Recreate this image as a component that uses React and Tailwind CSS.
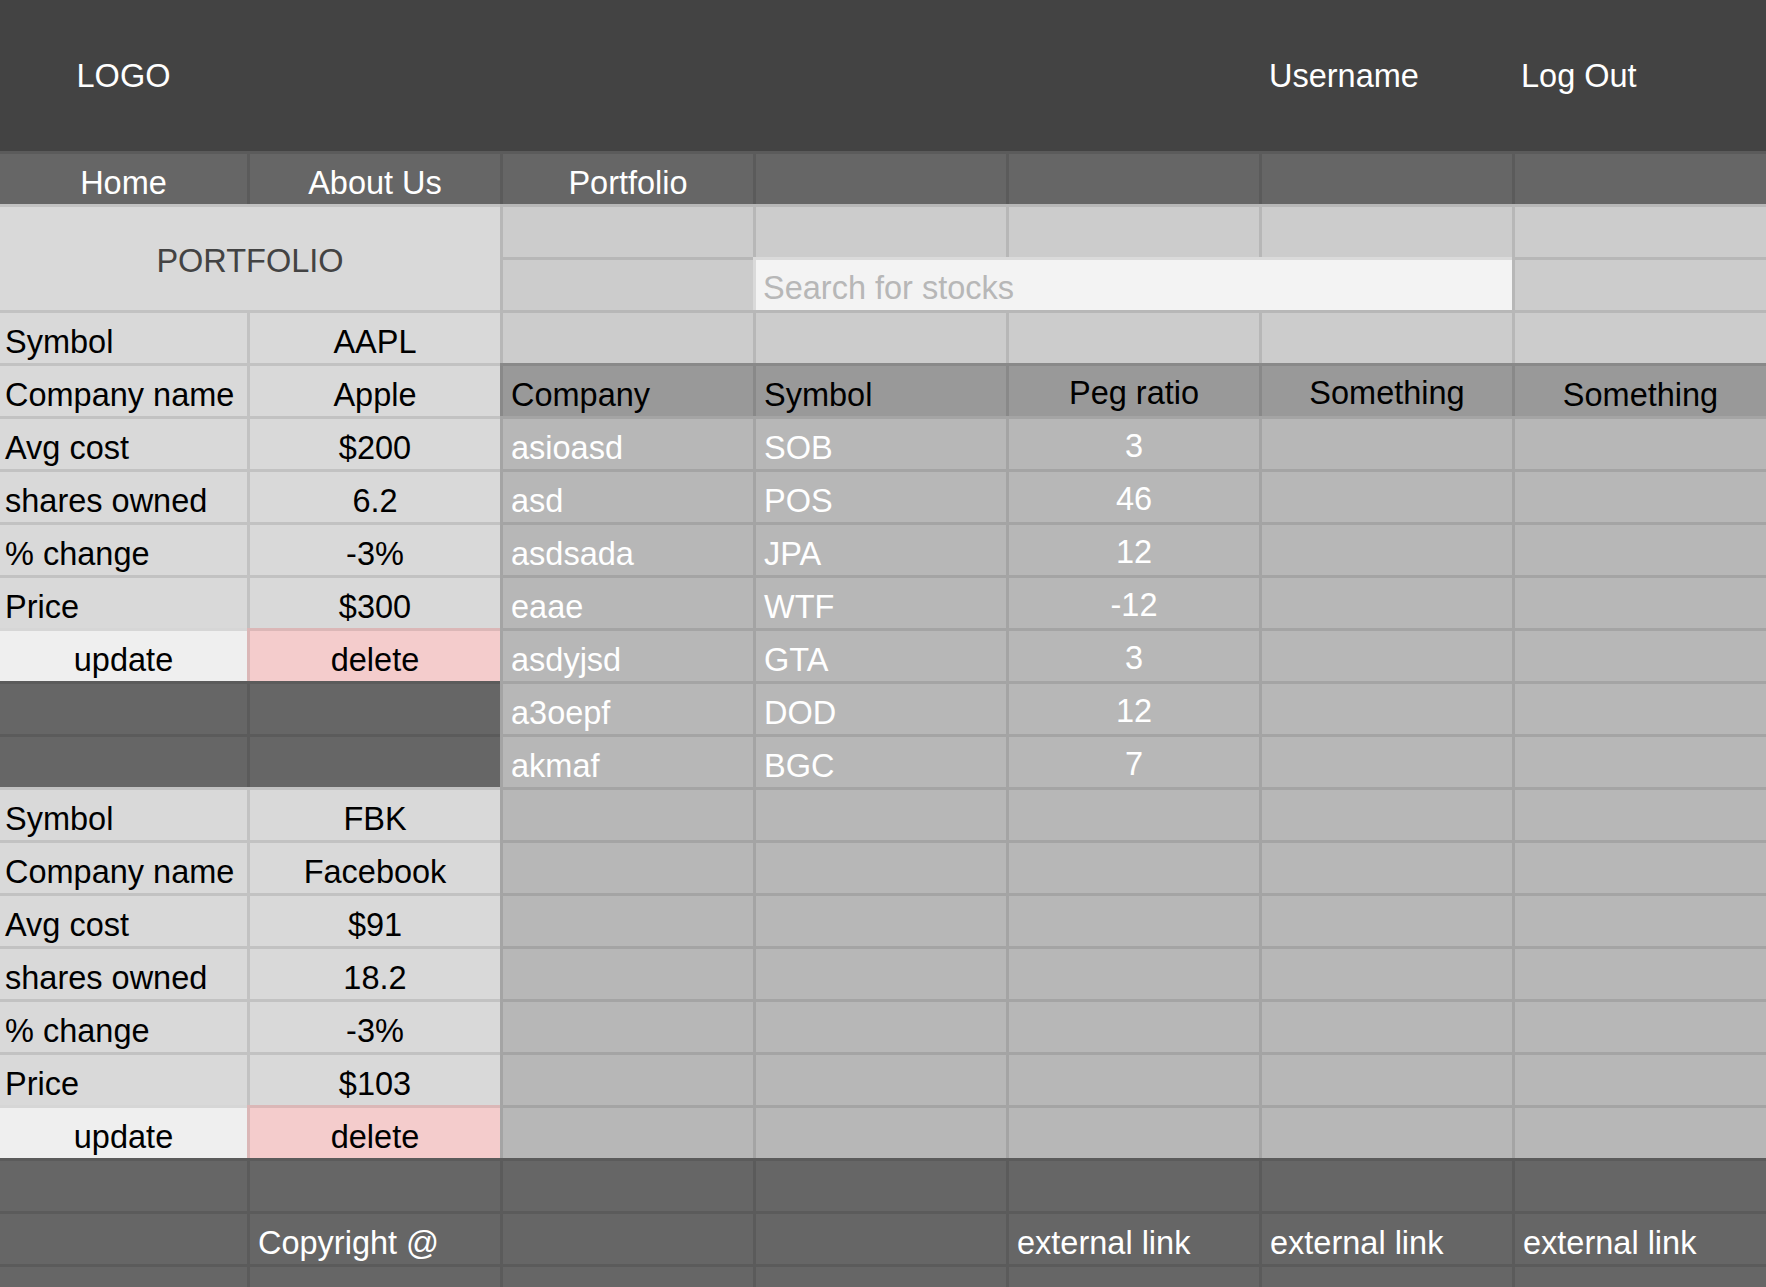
import clsx from 'clsx';

const portfolios = [
  {
    rows: [
      ['Symbol', 'AAPL'],
      ['Company name', 'Apple'],
      ['Avg cost', '$200'],
      ['shares owned', '6.2'],
      ['% change', '-3%'],
      ['Price', '$300'],
    ],
  },
  {
    rows: [
      ['Symbol', 'FBK'],
      ['Company name', 'Facebook'],
      ['Avg cost', '$91'],
      ['shares owned', '18.2'],
      ['% change', '-3%'],
      ['Price', '$103'],
    ],
  },
];

const stocks = [
  ['asioasd', 'SOB', '3'],
  ['asd', 'POS', '46'],
  ['asdsada', 'JPA', '12'],
  ['eaae', 'WTF', '-12'],
  ['asdyjsd', 'GTA', '3'],
  ['a3oepf', 'DOD', '12'],
  ['akmaf', 'BGC', '7'],
];

// one spreadsheet-like cell: line on top and left, text sits near the bottom
const Cell = ({ first, bg, center, raised, className, children }) => (
  <div
    className={clsx(
      'flex items-end border-t-[3px] border-black/10 whitespace-nowrap',
      !first && 'border-l-[3px]',
      center ? 'justify-center' : first ? 'pl-[5px]' : 'pl-[8px]',
      raised ? 'pb-[7px]' : 'pb-[5px]',
      bg,
      className
    )}
  >
    {children}
  </div>
);

const Blank = ({ bg, first }) => <Cell bg={bg} first={first} />;

const App = () => {
  const left1 = portfolios[0].rows;
  const left2 = portfolios[1].rows;

  return (
    <div
      className="h-[1287px] w-[1766px] overflow-hidden bg-[#666666] text-[32.5px] leading-none"
      style={{ fontFamily: '"Liberation Sans", Arial, sans-serif' }}
    >
      {/* Header */}
      <div className="grid h-[151px] grid-cols-[247px_repeat(5,253px)_1fr] items-center bg-[#434343] pt-[2px] text-white">
        <div className="flex justify-center">LOGO</div>
        <div className="col-start-6 pl-[10px]">Username</div>
        <div className="pl-[9px]">Log Out</div>
      </div>

      <div className="grid grid-cols-[247px_repeat(5,253px)_1fr] auto-rows-[53px]">
        {/* Nav */}
        <Cell first center bg="bg-[#666666]" className="text-white">Home</Cell>
        <Cell center bg="bg-[#666666]" className="text-white">About Us</Cell>
        <Cell center bg="bg-[#666666]" className="text-white">Portfolio</Cell>
        <Blank bg="bg-[#666666]" />
        <Blank bg="bg-[#666666]" />
        <Blank bg="bg-[#666666]" />
        <Blank bg="bg-[#666666]" />

        {/* Portfolio title + search */}
        <div className="col-span-2 row-span-2 flex items-center justify-center border-t-[3px] border-black/10 bg-[#d9d9d9] pt-[5px] text-[#434343]">
          PORTFOLIO
        </div>
        <Blank bg="bg-[#cccccc]" />
        <Blank bg="bg-[#cccccc]" />
        <Blank bg="bg-[#cccccc]" />
        <Blank bg="bg-[#cccccc]" />
        <Blank bg="bg-[#cccccc]" />

        <Blank bg="bg-[#cccccc]" />
        <div className="col-span-3 border-t-[3px] border-l-[3px] border-black/10 bg-[#f3f3f3]">
          <input
            type="text"
            placeholder="Search for stocks"
            className="box-border h-full w-full bg-transparent pl-[7px] pt-[7px] text-[32.5px] text-black outline-none placeholder:text-[#b7b7b7]"
          />
        </div>
        <Blank bg="bg-[#cccccc]" />

        {/* Symbol row */}
        <Cell first bg="bg-[#d9d9d9]">{left1[0][0]}</Cell>
        <Cell center bg="bg-[#d9d9d9]">{left1[0][1]}</Cell>
        <Blank bg="bg-[#cccccc]" />
        <Blank bg="bg-[#cccccc]" />
        <Blank bg="bg-[#cccccc]" />
        <Blank bg="bg-[#cccccc]" />
        <Blank bg="bg-[#cccccc]" />

        {/* Company row + table header */}
        <Cell first bg="bg-[#d9d9d9]">{left1[1][0]}</Cell>
        <Cell center bg="bg-[#d9d9d9]">{left1[1][1]}</Cell>
        <Cell bg="bg-[#999999]">Company</Cell>
        <Cell bg="bg-[#999999]">Symbol</Cell>
        <Cell center raised bg="bg-[#999999]">Peg ratio</Cell>
        <Cell center raised bg="bg-[#999999]">Something</Cell>
        <Cell center bg="bg-[#999999]">Something</Cell>

        {stocks.map((s, i) => {
          let left;
          if (i < 4) {
            const [label, value] = left1[i + 2];
            left = (
              <>
                <Cell first bg="bg-[#d9d9d9]">{label}</Cell>
                <Cell center bg="bg-[#d9d9d9]">{value}</Cell>
              </>
            );
          } else if (i === 4) {
            left = (
              <>
                <Cell first center bg="bg-[#efefef]">update</Cell>
                <Cell center bg="bg-[#f4cccc]">delete</Cell>
              </>
            );
          } else {
            left = (
              <>
                <Blank first bg="bg-[#666666]" />
                <Blank bg="bg-[#666666]" />
              </>
            );
          }
          return (
            <div key={s[0]} className="contents">
              {left}
              <Cell bg="bg-[#b7b7b7]" className="text-white">{s[0]}</Cell>
              <Cell bg="bg-[#b7b7b7]" className="text-white">{s[1]}</Cell>
              <Cell center raised bg="bg-[#b7b7b7]" className="text-white">{s[2]}</Cell>
              <Blank bg="bg-[#b7b7b7]" />
              <Blank bg="bg-[#b7b7b7]" />
            </div>
          );
        })}

        {/* Second portfolio */}
        {left2.map(([label, value]) => (
          <div key={label} className="contents">
            <Cell first bg="bg-[#d9d9d9]">{label}</Cell>
            <Cell center bg="bg-[#d9d9d9]">{value}</Cell>
            <Blank bg="bg-[#b7b7b7]" />
            <Blank bg="bg-[#b7b7b7]" />
            <Blank bg="bg-[#b7b7b7]" />
            <Blank bg="bg-[#b7b7b7]" />
            <Blank bg="bg-[#b7b7b7]" />
          </div>
        ))}
        <Cell first center bg="bg-[#efefef]">update</Cell>
        <Cell center bg="bg-[#f4cccc]">delete</Cell>
        <Blank bg="bg-[#b7b7b7]" />
        <Blank bg="bg-[#b7b7b7]" />
        <Blank bg="bg-[#b7b7b7]" />
        <Blank bg="bg-[#b7b7b7]" />
        <Blank bg="bg-[#b7b7b7]" />

        {/* Footer */}
        <Blank first bg="bg-[#666666]" />
        <Blank bg="bg-[#666666]" />
        <Blank bg="bg-[#666666]" />
        <Blank bg="bg-[#666666]" />
        <Blank bg="bg-[#666666]" />
        <Blank bg="bg-[#666666]" />
        <Blank bg="bg-[#666666]" />

        <Blank first bg="bg-[#666666]" />
        <Cell bg="bg-[#666666]" className="text-white">Copyright @</Cell>
        <Blank bg="bg-[#666666]" />
        <Blank bg="bg-[#666666]" />
        <Cell bg="bg-[#666666]" className="text-white">external link</Cell>
        <Cell bg="bg-[#666666]" className="text-white">external link</Cell>
        <Cell bg="bg-[#666666]" className="text-white">external link</Cell>

        <Blank first bg="bg-[#666666]" />
        <Blank bg="bg-[#666666]" />
        <Blank bg="bg-[#666666]" />
        <Blank bg="bg-[#666666]" />
        <Blank bg="bg-[#666666]" />
        <Blank bg="bg-[#666666]" />
        <Blank bg="bg-[#666666]" />
      </div>
    </div>
  );
};

export default App;
